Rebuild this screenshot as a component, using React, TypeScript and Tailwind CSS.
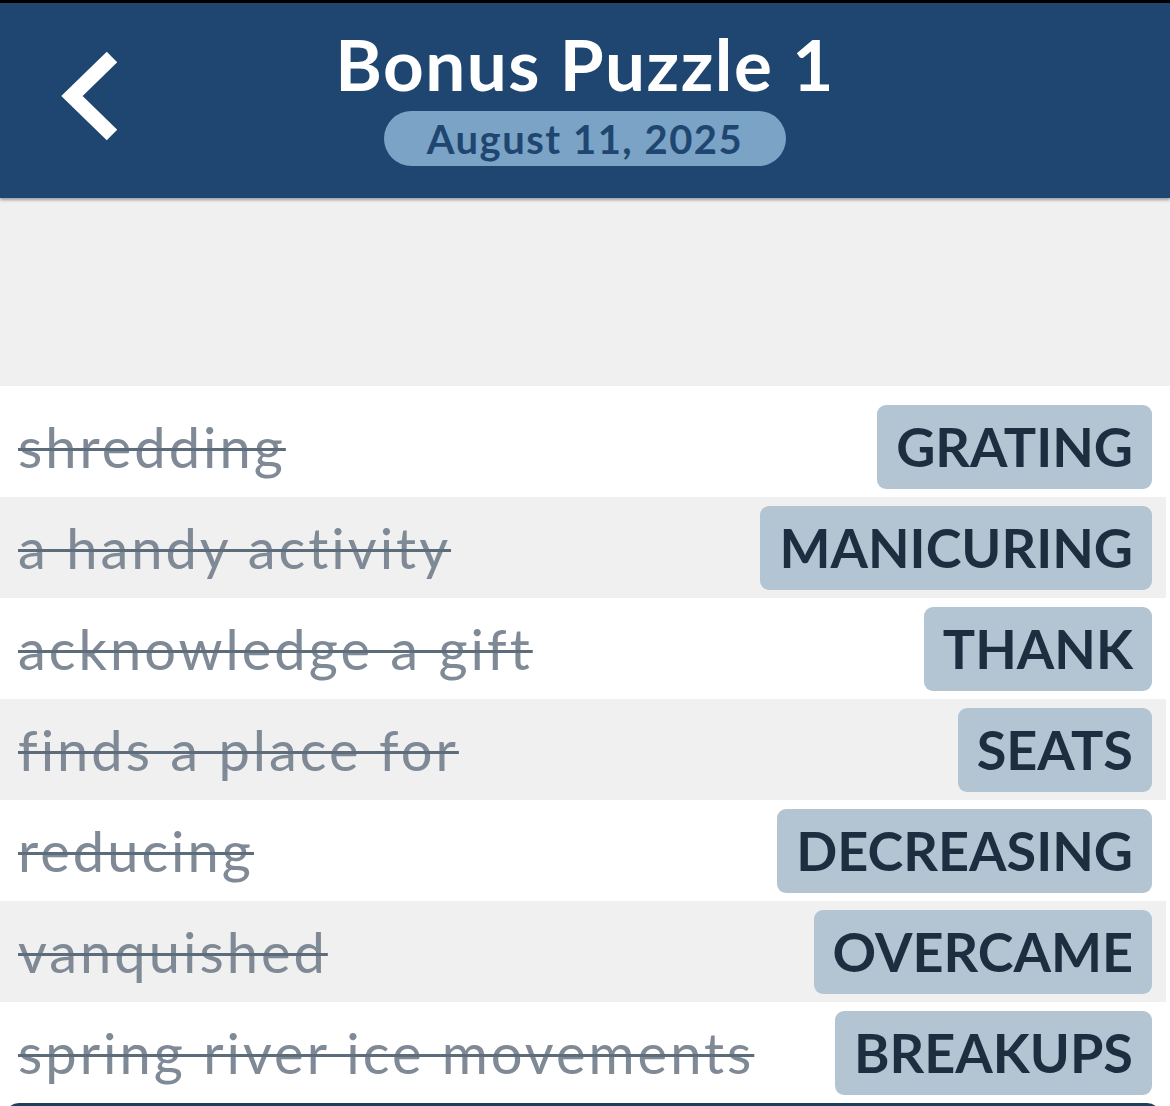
const clues = [
  { clue: 'shredding', answer: 'GRATING' },
  { clue: 'a handy activity', answer: 'MANICURING' },
  { clue: 'acknowledge a gift', answer: 'THANK' },
  { clue: 'finds a place for', answer: 'SEATS' },
  { clue: 'reducing', answer: 'DECREASING' },
  { clue: 'vanquished', answer: 'OVERCAME' },
  { clue: 'spring river ice movements', answer: 'BREAKUPS' },
];

export default function App() {
  return (
    <div className="w-[1170px] h-[1106px] overflow-hidden bg-white font-['Lato','Noto_Sans',sans-serif]">
      <header className="border-t-[3px] border-black bg-[#1f4670] h-[198px] relative flex flex-col items-center shadow-[0_2px_3px_rgba(0,0,0,0.35)]">
        <button className="absolute left-[54px] top-[44px] w-[72px] h-[100px] flex items-center justify-center">
          <svg width="72" height="100" viewBox="0 0 72 100">
            <polyline points="58,10 18,49 58,88" fill="none" stroke="white" strokeWidth="15" strokeLinecap="butt" strokeLinejoin="miter" />
          </svg>
        </button>
        <h1 className="mt-[20px] text-white font-bold text-[71px] leading-[82px] tracking-[1.5px]">Bonus Puzzle 1</h1>
        <div className="mt-[6px] w-[402px] h-[55px] rounded-full bg-[#7ba3c6] flex items-center justify-center">
          <span className="text-[#1f4670] font-bold text-[40px] leading-none tracking-[1.5px]">August 11, 2025</span>
        </div>
      </header>

      <div className="h-[188px] bg-[#f0f0f0]" />

      <div className="pt-[10px] pr-[4px]">
        {clues.map((c, i) => (
          <div
            key={c.answer}
            className={`h-[101px] flex items-center justify-between pl-[18px] pr-[14px] ${i % 2 === 1 ? 'bg-[#f0f0f0]' : 'bg-white'}`}
          >
            <span className="text-[56px] tracking-[3px] text-[#7f8a96] line-through decoration-[#5d6c7a] decoration-[3px] whitespace-nowrap">
              {c.clue}
            </span>
            <span className="h-[84px] px-[19px] rounded-[9px] bg-[#b3c5d3] flex items-center text-[#1c2e40] font-bold text-[54px]">
              {c.answer}
            </span>
          </div>
        ))}
        <div className="mx-[5px] h-[20px] rounded-t-[14px] bg-[#1f3d5c]" />
      </div>
    </div>
  );
}
